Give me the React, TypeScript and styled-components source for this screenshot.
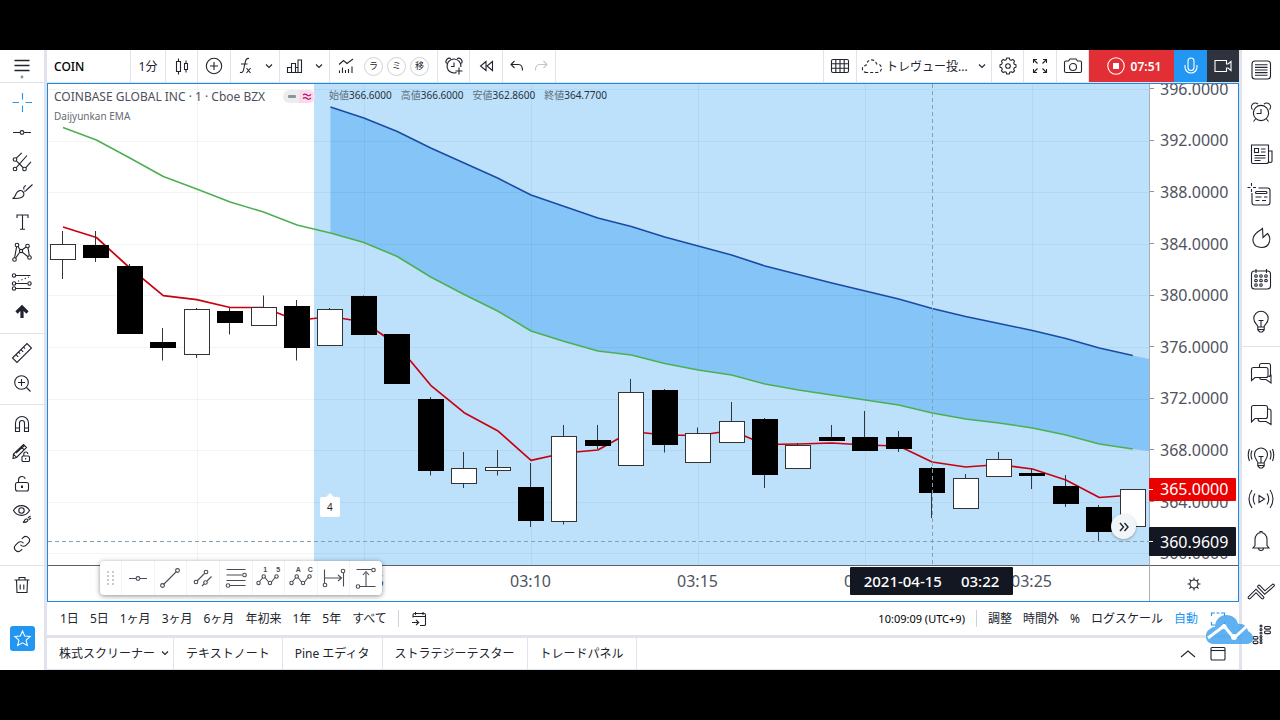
import React from 'react';
import styled, { createGlobalStyle, css } from 'styled-components';

const GlobalStyle = createGlobalStyle`
  *, *::before, *::after { box-sizing: border-box; }
  html, body { margin: 0; padding: 0; background: #000; }
  body, button {
    font-family: "Noto Sans", "Noto Sans CJK JP", sans-serif;
    font-size: 12px;
    color: #20242e;
  }
  button { margin: 0; padding: 0; border: 0; background: none; cursor: pointer; }
  ul { margin: 0; padding: 0; list-style: none; }
  h1, h2, p { margin: 0; font-weight: 400; }
`;

const LINE = '#e0e3eb';
const BLUE = '#2196f3';

/* ---------- icons ---------- */

const Glyph = styled.svg<{ $size: number }>`
  display: block;
  flex: none;
  width: ${p => p.$size}px;
  height: ${p => p.$size}px;
  overflow: visible;
  fill: none;
  stroke: currentColor;
  stroke-width: 1.1;
`;

const ICONS: Record<string, React.ReactNode> = {
  menu: <><path d="M-7.5-5.5h15M-7.5-.5h15M-7.5 4.5h15" strokeWidth="1.7" /><circle cx="0" cy="11" r="1.4" fill="#8a8d96" stroke="none" /></>,
  cross: <path d="M-9.5.5h6.5M3.5.5H10M.5-9v6.5M.5 3.5V10" />,
  hline: <><path d="M-9 .5h7M2 .5h7" /><circle cx="0" cy=".5" r="1.9" /></>,
  fork: <><circle cx="-7" cy="-2.5" r="1.8" /><circle cx="-7" cy="7" r="1.8" /><circle cx="2.5" cy="7" r="1.8" /><path d="M-5.7-3.8l5.5-5.4M-5.7 5.7L5-6.5M3.8 5.7L9-.2M-5.6-1.2L1 5.5" /></>,
  brush: <><path d="M-9.5 6.500c3-.8 2.500-3 4-5.500c1.500-2.600 4.500-3.300 6.300-1.500c2 2 1.200 4.800-1.300 6c-2.500 1.200-5.500 1-9 1zM2-2.500c-.8-2 .2-3.500 2-4M4.500-2L10.500-7.500M2.200-.8c1.300 0 1.900-.4 2.300-1.200" /></>,
  text: <path d="M-5-4v-3H6v3M.5-7V7M-2 7.200h5" />,
  pattern: <><circle cx="-5" cy="-7" r="1.800" /><circle cx="5.500" cy="-6" r="1.800" /><circle cx="-7.500" cy="7.500" r="1.800" /><circle cx="7.500" cy="5.500" r="1.800" /><circle cx="-1" cy="-1" r="1.600" /><path d="M-5.400-5.200l-2 10.800M-4-5.500l2 3.200M0-2l4-3M6-4.200L7.300 3.700M0 0L6 4.700M-2.200.2L-6.300 6" /></>,
  fib: <><circle cx="-8" cy="-6.500" r="1.700" /><circle cx="7.500" cy="1.500" r="1.700" /><circle cx="-8" cy="1.500" r="1.700" /><circle cx="-8" cy="6.500" r="1.700" /><path d="M-6-6.500H8.500M-6 1.500H5.500M-6 6.500H8.500" /><path d="M-4-.8L7-5" strokeDasharray="1.200 2.400" /></>,
  arrowUp: <path d="M0-5.500V6M-5.500.5L0-5L5.500 .5" strokeWidth="3.200" />,
  ruler: <path d="M-9.500 5L5-9.500L9.500-5L-5 9.500zM-6 1.600l2.200 2.200M-3.500-.9l1.600 1.600M-1-3.400l2.200 2.200M1.500-5.900l1.600 1.600" />,
  zoomIn: <><circle cx="-.5" cy="-.5" r="6.800" /><path d="M4.500 4.500L8.500 8.500M-4-.5h7M-.5-4v7" /></>,
  magnet: <path d="M-6.500 7.500V-1a6.500 6.500 0 0 1 13 0V7.500H2.500V-1a2.500 2.500 0 0 0-5 0V7.500zM-6.500 4h4M2.500 4h4" />,
  pencilLock: <><path d="M-9 4.500L-8.500 0L1.500-9.500L4.500-6.500L-5.500 3.500zM-8.500 0l3 3.500M-6-1L2.500-8.500M-.8-7.200l3 3" /><rect x="0" y="2" width="7.500" height="5.500" rx="1" fill="#fff" /><path d="M1.800 2V0a2 2 0 0 1 4 0" /><path d="M3.700 4v1.500" /></>,
  lock: <><rect x="-6.500" y="-1.500" width="13" height="8.500" rx="2" /><path d="M-3.500-1.500V-4a3.500 3.500 0 0 1 6.800-1.200" /><path d="M0 1.500v2.500" strokeWidth="2" /></>,
  eye: <><path d="M-8.500-3.500C-5-10 4-10 7.500-3.500C4 3-5 3-8.500-3.500z" /><circle cx="-.5" cy="-3.500" r="2.700" /><path d="M1 8.500c1.500-.5 1-3 3-3.500c2-.3 2.500 1 1.500 2.200c-1 1.300-3 1.300-4.500 1.300zM6 4l2.500-2M7 5.500l2-1.500" /></>,
  chain: <g transform="translate(-9 -9) scale(.75)" strokeWidth="1.500"><path d="M10 13a5 5 0 0 0 7.540.540l3-3a5 5 0 0 0-7.070-7.070l-1.720 1.710M14 11a5 5 0 0 0-7.540-.540l-3 3a5 5 0 0 0 7.070 7.070l1.710-1.710" /></g>,
  trash: <path d="M-7.500-5h15M-3-5v-2.500H3V-5M-5.500-5l.5 12.500H5L5.500-5M-1.800-.5v5M1.800-.5v5" />,
  star: <path d="M0-7.500L2.200-2.500L7.700-2L3.600 1.700L4.800 7L0 4.300L-4.800 7L-3.600 1.700L-7.700-2L-2.200-2.500z" />,
  candles: <path d="M-5.500-4.500h4v10h-4zM-3.500-7.500v3M-3.500 5.500v3M2.500-2.500h3v6h-3zM4-5.500v3M4 3.500v3" />,
  plusCircle: <><circle cx="0" cy="0" r="7.700" /><path d="M-4 0h8M0-4v8" /></>,
  fx: <><path d="M4-7.500C1.500-8 .8-6.500.3-4L-1.500 4C-2 6.500-3.500 7-5 6.200M-4-2h6.500" /><path d="M1.500 2l4 5M5.500 2l-4 5" /></>,
  chevron: <path d="M-3-1.500L0 1.500L3-1.500" />,
  bars: <path d="M-7.500 6.500v-5h4v5zM-3.500 6.500V-2.500h4V6.500zM.5 6.500V1.500h2.500M3 6.500V-6h3.500V6.500zM-7.500 6.500h14" />,
  indicators: <path d="M-7-1.500L-2.500-5.500L1-2.500L7-7M-6.500 7V4.500M-3.500 7V1.500M-.5 7V4M2.500 7V3M6 7V.5" />,
  alarm: <><circle cx="0" cy="1" r="7.600" /><path d="M-8.500-2.500A3.700 3.700 0 0 1-3-7.800M3-7.800A3.700 3.700 0 0 1 8.500-2.500M0-3v4.500h-4.500M-5.500 7l-2 2.500M5.500 7l2 2.500" /></>,
  alarmAdd: <><path d="M2.500 6.500A7 7 0 1 1 6.900 1M-7.500-2.500A3.500 3.500 0 0 1-3-7.500M3-7.500A3.500 3.500 0 0 1 7.500-2.500M0-3.500v4h-3M5 1.500v7M1.500 5h7" /></>,
  rewind: <path d="M0-4.500V4.500L-5.500 0zM6.500-4.500V4.500L1 0z" />,
  undo: <path d="M-2.500-5L-6-1.500L-2.500 2M-6-1.500H1.500Q5.500-1.500 5.500 4.500" />,
  redo: <path d="M2.500-5L6-1.500L2.500 2M6-1.500H-1.500Q-5.500-1.500-5.500 4.500" />,
  grid: <><rect x="-8.500" y="-6.500" width="17" height="13" rx="1.500" /><path d="M-8.500-2.200h17M-8.500 2.200h17M-4.200-6.500v13M0-6.500v13M4.200-6.500v13" /></>,
  cloud: <path d="M-5 6.500C-11 6.500-11-.5-6-.5C-5.500-7.500 3.500-8 4.500-2C11-2.500 11 6.500 5 6.500z" strokeDasharray="3 2" />,
  gear: <><path d="M-1.500-7.800h3l.6 2 1.700.7 1.900-1 2.100 2.100-1 1.900.7 1.700 2 .6v3l-2 .6-.7 1.700 1 1.900-2.100 2.100-1.900-1-1.700.7-.6 2h-3l-.6-2-1.700-.7-1.900 1-2.100-2.100 1-1.900-.7-1.700-2-.6v-3l2-.6.7-1.700-1-1.900 2.100-2.100 1.900 1 1.700-.7z" transform="scale(.84) translate(0 -1.700)" strokeWidth="1.300" strokeLinejoin="round" /><circle cx="0" cy="0" r="2.300" /></>,
  expand: <path d="M-6.500-3V-6.500H-3M-6.500-6.500L-2.500-2.500M3-6.500H6.500V-3M6.500-6.500L2.500-2.500M-6.500 3V6.500H-3M-6.500 6.500L-2.500 2.500M3 6.500H6.500V3M6.500 6.500L2.500 2.500" />,
  camera: <><path d="M-8.500-3.500q0-1.500 1.500-1.500h2.500l1.500-2h6l1.500 2h2.500q1.500 0 1.500 1.500v8.500q0 1.500-1.500 1.500h-14q-1.500 0-1.500-1.500z" /><circle cx="0" cy="1" r="3.500" /></>,
  record: <><circle cx="0" cy="0" r="8.200" /><rect x="-3" y="-3" width="6" height="6" fill="currentColor" stroke="none" /></>,
  mic: <><rect x="-3" y="-8" width="6" height="12.500" rx="3" /><path d="M-6-1V1a6 6 0 0 0 12 0V-1" /></>,
  video: <path d="M-8-5.500H3.500V-2L5-2L8-4.500V4.500L5 2L3.500 2V5.500H-8z" />,
  list: <><rect x="-9" y="-9" width="18.500" height="18" rx="3" /><path d="M-6-5.200h12.500M-6-2.600h12.500M-6 0h12.500M-6 2.600h12.500M-6 5.200h12.500" /></>,
  news: <><path d="M-9.500-9H7.500V7.500Q7.500 9.500 5.500 9.500H-8Q-9.500 9.500-9.500 8zM7.500-3H11V7.500a2 2 0 0 1-3.500 0M-6.500-5.500h4v4h-4zM0-5h4.500M0-2h4.500M-6.500 1.500h11M-6.500 4h11M-6.500 6.500h6" /></>,
  dataWindow: <><path d="M-9-3v9.500q0 2.500 2.500 2.500h13q2.500 0 2.500-2.500v-12q0-2.500-2.500-2.500h-9M-9.500-13v3M-9.500-7v3M-13.500-8.500h3M-8-8.500h3" /><rect x="-5.500" y="-4.500" width="11.500" height="2" rx="1" /><path d="M-5.500 1h6M3 1h3.500M-5.500 4.500h4M1 4.500h4" /></>,
  flame: <path d="M-5-4.500C-10 0-9 9.500 .5 9.500C9.500 9.500 10.500-.5 6.500-4.500L2-.5L1.500-9.500C-.5-7.500-3.500-6.500-5-4.500z" />,
  calendar: <><rect x="-9.500" y="-9" width="19" height="18" rx="3" /><path d="M-5-11v4M5.500-11v4" />{[-5, 0, 5].flatMap(x => [-4, .5, 5].map(y => x === 5 && y === 5 ? null : <circle key={x + '_' + y} cx={x} cy={y} r="1.300" />))}</>,
  bulb: <path d="M-3 5C-3.300 2.500-7.200 1.500-7.200-3.500A7.200 7.200 0 0 1 7.200-3.500C7.200 1.500 3.300 2.500 3 5zM-3.200 5v3l2 2h2.400l2-2v-3M-3 7.500H3M0 4.500V-1.500M-2.500-1.500h5" />,
  chats: <path d="M-1.500-5.500V-7.500q0-2 2-2h7q2 0 2 2V1.500q0 2-2 2M-7.500-5.500H5q2 0 2 2V2.500q0 2-2 2H-6L-9.500 7.500V-3.500q0-2 2-2M-1.500 4.500q.5 2 2 2h4.500l5 3.500V1.500" />,
  chat: <path d="M-7.500-9.500H4.500q2 0 2 2V1.500q0 2-2 2H-6L-9.500 7V-7.500q0-2 2-2M6.500-6H7.500q2.500 0 2.500 2V9.500L5 6.500H-1q-2 0-2-3" />,
  bulbWaves: <><path d="M-3 6C-3.300 3.500-6.500 2-6.500-2.500A6.500 6.500 0 0 1 6.500-2.500C6.500 2 3.300 3.500 3 6zM-3.200 6v3l2 2h2.400l2-2v-3M-3 8.500H3M0 5.500V-.5M-2.500-.5h5" /><path d="M-9-6.500Q-11-2-9 2.500M-11.500-8Q-14-2-11.500 4M9-6.500Q11-2 9 2.500M11.500-8Q14-2 11.500 4" /></>,
  stream: <path d="M-2-3.500L3.500 0L-2 3.500zM-6-5.500Q-9.500 0-6 5.500M-9-9Q-15 0-9 9M6-5.500Q9.500 0 6 5.500M9-9Q15 0 9 9" />,
  bell: <path d="M-6 4.500V-1.500C-6-6-3-8-1-8.200V-9.500H1V-8.200C3-8 6-6 6-1.500V4.500L8 7H-8zM-2.500 7Q-2.500 9.500 0 9.500T2.500 7" />,
  depth: <g strokeLinecap="round"><path d="M-11.500 5.500L-5-1L1.500 5.500M-2-5.500L3.800 .5L12-6.500" strokeWidth="3.600" /><path d="M-11.500 5.500L-5-1L1.500 5.500M-2-5.500L3.800 .5L12-6.500" stroke="#fff" strokeWidth="1.500" /></g>,
  dom: <>{[-8, -4.500, -1].map(y => <circle key={y} cx="0" cy={y} r="1" />)}{[-7.500, -3].map(y => <rect key={y} x="3.500" y={y} width="6" height="2.600" rx="1.300" />)}{[2.500, 7].map(y => <rect key={y} x="-8" y={y} width="5" height="2.600" rx="1.300" />)}{[2.500, 5.500, 8.500].map(y => <circle key={y} cx="0" cy={y} r="1" />)}</>,
  trend: <><path d="M-6.500 6.500L6.500-6.500" /><circle cx="-7.500" cy="7.500" r="1.900" /><circle cx="7.500" cy="-7.500" r="1.900" /></>,
  channel: <><path d="M-6 3L1.500-4.500M-1 8L1 6M4 3L8.500-1.500" /><circle cx="-7" cy="4" r="1.800" /><circle cx="3" cy="-6" r="1.800" /><circle cx="2.500" cy="4.500" r="1.800" /></>,
  levels: <><path d="M-9.500-8.500H9.500M-9.500-3H6M-9.500 2.500H9.500M-6 7.500H9.500" /><circle cx="8.500" cy="-3" r="1.800" /><circle cx="-8" cy="7.500" r="1.800" /></>,
  zigzag: <><path d="M-8.500 3.500l3-3.500M-3-.5l3.500 4.500M3.500 4L7-.5" /><circle cx="-9.500" cy="5" r="1.700" /><circle cx="-4.300" cy="-1.500" r="1.700" /><circle cx="2" cy="5" r="1.700" /><circle cx="8.500" cy="-1.500" r="1.700" /></>,
  hrange: <><path d="M-9.500-8.500V5M9.500-5V8.500M-9.500 0H7M4-3L7.500 0L4 3" /><circle cx="-9" cy="7" r="1.800" /><circle cx="9" cy="-7" r="1.800" /></>,
  vrange: <><path d="M-9.500-8.500H5.500M-6 8.500H9.500M0 8V-5M-3-3L0-6.500L3-3" /><circle cx="7.500" cy="-8" r="1.800" /><circle cx="-8" cy="8.500" r="1.800" /></>,
  gotoDate: <path d="M-6-1.500V-4q0-1.500 1.500-1.500H5q1.500 0 1.500 1.500v9.500q0 1-1.500 1H1M-6-2.500H6.500M-3.500-7v3M4-7v3M-7 3.500H-.5M-3 .8L-.3 3.500L-3 6.200" />,
  sun: <><circle cx="0" cy="0" r="4" /><path d="M0-4V-6.500M0 4V6.500M-4 0H-6.500M4 0H6.500M-2.800-2.800L-4.600-4.600M2.800-2.800L4.600-4.600M-2.800 2.800L-4.600 4.600M2.800 2.800L4.600 4.600" /></>,
  corners: <path d="M-6.500-3V-6H-3M-1.500-6H1.500M3-6H6.500V-3M-6.500 3V6H-3M3 6H6.500V3" />,
  up: <path d="M-7 3L0-3L7 3" />,
  panel: <><rect x="-7" y="-6.500" width="14" height="12.500" rx="1" /><path d="M-7-3.500H7" /></>,
  forward: <path d="M-4-4L-.5 0L-4 4M.5-4L4 0L.5 4" strokeWidth="1.400" />,
};

/* Drawings are centred on the origin, so the box size crops without scaling. */
const Icon = ({ name, size = 28 }: { name: string; size?: number }) => (
  <Glyph $size={size} viewBox={`${-size / 2} ${-size / 2} ${size} ${size}`} aria-hidden="true">{ICONS[name]}</Glyph>
);

/* ---------- page frame ---------- */

const Page = styled.div`
  min-height: 100vh;
  display: grid;
  grid-template-rows: 50px minmax(620px, 1fr) 50px;
  background: #000;
`;

const Workspace = styled.div`
  grid-row: 2;
  display: grid;
  grid-template-columns: 44px minmax(0, 1fr) 38px;
  column-gap: 3px;
  background: ${LINE};
`;

const Center = styled.main`
  position: relative;
  display: flex;
  flex-direction: column;
  min-width: 0;
`;

/* ---------- left tools ---------- */

const ToolRail = styled.nav`
  display: flex;
  flex-direction: column;
  align-items: center;
  background: #fff;
`;

const ToolGroup = styled.ul`
  width: 100%;
  padding: 4px 0 6px;
  border-bottom: 1px solid ${LINE};
  &:last-of-type { border-bottom: 0; }
`;

const ToolButton = styled.button<{ $active?: boolean }>`
  display: flex;
  align-items: center;
  justify-content: center;
  width: 100%;
  height: 30px;
  color: ${p => (p.$active ? BLUE : '#20242e')};
`;

const MenuButton = styled(ToolButton)`
  height: 33px;
  flex: none;
  border-bottom: 1px solid ${LINE};
`;

const FavoriteButton = styled.button`
  display: flex;
  align-items: center;
  justify-content: center;
  width: 25px;
  height: 25px;
  margin: auto 0 19px;
  border-radius: 3px;
  background: ${BLUE};
  color: #fff;
`;

/* ---------- top bar ---------- */

const TopBar = styled.header`
  display: flex;
  height: 32px;
  margin-bottom: 1px;
  background: #fff;
  overflow: hidden;
`;

const Cell = styled.div<{ $w?: number; $start?: boolean }>`
  display: flex;
  align-items: center;
  justify-content: ${p => (p.$start ? 'flex-start' : 'center')};
  flex: none;
  width: ${p => p.$w ?? 33}px;
  padding-left: ${p => (p.$start ? 7 : 0)}px;
  border-right: 1px solid ${LINE};
`;

const TemplateCell = styled(Cell)`
  padding-right: 6px;
`;

const RightCells = styled.div`
  display: flex;
  margin-left: auto;
  border-left: 1px solid ${LINE};
`;

const BarButton = styled.button<{ $w?: number; $muted?: boolean }>`
  display: flex;
  align-items: center;
  justify-content: center;
  flex: none;
  height: 32px;
  width: ${p => (p.$w ? `${p.$w}px` : 'auto')};
  color: ${p => (p.$muted ? '#c4c6cc' : '#20242e')};
`;

const SymbolButton = styled(BarButton)`
  font-weight: 500;
  color: #000;
`;

const RoundButton = styled.button`
  width: 19px;
  height: 19px;
  margin: 0 2px;
  border: 1px solid #d0d2d8;
  border-radius: 50%;
  font-size: 9px;
  line-height: 16px;
`;

const LayoutName = styled.span`
  width: 88px;
  text-align: left;
  white-space: nowrap;
`;

const MediaButton = styled.button<{ $w: number; $bg: string }>`
  display: flex;
  align-items: center;
  justify-content: center;
  gap: 1px;
  height: 32px;
  width: ${p => p.$w}px;
  background: ${p => p.$bg};
  color: #fff;
  font-weight: 600;
`;

/* ---------- chart ---------- */

const ChartFrame = styled.section`
  position: relative;
  flex: 1;
  display: grid;
  grid-template-columns: minmax(0, 1fr) 89px;
  grid-template-rows: minmax(0, 1fr) 36px;
  border: 1px solid #1e88e5;
  background: #fff;
`;

const Plot = styled.div`
  position: relative;
  min-height: 0;
`;

const PlotSvg = styled.svg`
  position: absolute;
  inset: 0;
  width: 100%;
  height: 100%;
  display: block;
`;

const Legend = styled.div`
  position: absolute;
  top: 3px;
  left: 6px;
  right: 0;
`;

const LegendRow = styled.div`
  display: flex;
  align-items: center;
  height: 18px;
  white-space: nowrap;
`;

const LegendTitle = styled.h1`
  width: 229px;
  font-size: 12px;
  color: #4c505b;
`;

const Badge = styled.span`
  display: flex;
  width: 32px;
  height: 13px;
  border-radius: 6px;
  overflow: hidden;
  background: linear-gradient(90deg, #eceded 50%, #fbd9ec 50%);
`;

const Ohlc = styled.p`
  display: flex;
  gap: 9px;
  margin-left: 14px;
  padding-bottom: 3px;
  font-size: 10px;
  color: #5c6f80;
`;

const OhlcValue = styled.span`
  color: #26323f;
`;

const StudyName = styled.h2`
  margin-top: 3px;
  font-size: 10px;
  line-height: 16px;
  color: #666a74;
`;

const DividendTag = styled.button`
  position: absolute;
  left: 25.6%;
  bottom: 48px;
  width: 20px;
  height: 20px;
  margin-left: -10px;
  border-radius: 2px;
  background: #fff;
  font-size: 10px;
  &::before {
    content: "";
    position: absolute;
    left: 6px;
    top: -4px;
    border: 4px solid transparent;
    border-top: 0;
    border-bottom-color: #fff;
  }
`;

const JumpButton = styled.button`
  position: absolute;
  right: 13px;
  bottom: 26px;
  display: flex;
  align-items: center;
  justify-content: center;
  width: 25px;
  height: 25px;
  border-radius: 50%;
  background: #f2f5f8;
  box-shadow: 0 1px 3px rgba(0, 0, 0, 0.3);
`;

const PriceAxis = styled.div`
  position: relative;
  min-height: 0;
  border-left: 1px solid #a9adb5;
`;

const PriceClip = styled.div`
  position: absolute;
  inset: 0;
  overflow: hidden;
`;

const PriceList = styled.ul`
  display: flex;
  flex-direction: column;
  height: calc(100% + 35px);
  margin-top: -21px;
`;

const axisText = css`
  font-size: 16px;
  line-height: 20px;
  white-space: nowrap;
`;

const PriceItem = styled.li`
  ${axisText}
  flex: 1;
  display: flex;
  align-items: center;
  gap: 6px;
  color: #50535e;
  &::before { content: ""; width: 4px; height: 1px; background: #8b8f99; }
`;

const PriceTag = styled.div<{ $bg: string; $h: number }>`
  ${axisText}
  position: absolute;
  left: -1px;
  display: flex;
  align-items: center;
  gap: 7px;
  width: 87px;
  height: ${p => p.$h}px;
  margin-top: -${p => p.$h / 2}px;
  border-radius: 1px;
  background: ${p => p.$bg};
  color: #fff;
  &::before { content: ""; width: 4px; height: 1px; background: #fff; }
`;

const TimeAxis = styled.div`
  position: relative;
  border-top: 1px solid #5d606b;
`;

const TimeList = styled.ul`
  display: grid;
  grid-template-columns: repeat(6, 1fr);
  padding: 5px 34px 0 65px;
`;

const TimeItem = styled.li`
  ${axisText}
  text-align: center;
  color: #50535e;
`;

const TimeTag = styled.div`
  ${axisText}
  position: absolute;
  top: 1px;
  left: 80.2%;
  display: flex;
  align-items: center;
  justify-content: center;
  gap: 19px;
  width: 163px;
  height: 28px;
  margin-left: -81px;
  border-radius: 1px;
  background: #131722;
  color: #fff;
  font-size: 15px;
  font-weight: 500;
`;

const AxisCorner = styled.div`
  display: flex;
  align-items: center;
  justify-content: center;
  border-top: 1px solid #5d606b;
  border-left: 1px solid #a9adb5;
`;

const FloatingTools = styled.ul`
  position: absolute;
  left: 52px;
  bottom: 6px;
  display: flex;
  align-items: center;
  height: 34px;
  width: 282px;
  border-radius: 4px;
  background: #fff;
  box-shadow: 0 1px 5px rgba(0, 0, 0, 0.45);
  li { flex: 1; height: 34px; border-left: 1px solid #f3f3f5; }
`;

const Handle = styled.svg`
  flex: none;
  width: 21px;
  height: 14px;
  fill: #b5b8c0;
`;

const FloatButton = styled.button`
  position: relative;
  display: flex;
  align-items: center;
  justify-content: center;
  width: 100%;
  height: 34px;
  color: #4a4d57;
`;

const FloatLabel = styled.span`
  position: absolute;
  top: 3px;
  right: 4px;
  display: flex;
  justify-content: space-between;
  width: 17px;
  font-family: "Liberation Sans", sans-serif;
  font-size: 7px;
  line-height: 12px;
  font-weight: 700;
`;

/* ---------- bottom bars ---------- */

const RangeBar = styled.div`
  display: flex;
  align-items: center;
  height: 33px;
  padding: 0 12px 0 13px;
  background: #fff;
`;

const RangeGroup = styled.div`
  display: flex;
  align-items: center;
  gap: 11px;
  &:last-child { margin-left: auto; }
`;

const TextButton = styled.button<{ $active?: boolean }>`
  flex: none;
  line-height: 20px;
  white-space: nowrap;
  color: ${p => (p.$active ? BLUE : '#20242e')};
`;

const Clock = styled.button`
  font-size: 11px;
  line-height: 20px;
  color: #000;
`;

const Divider = styled.span`
  width: 1px;
  height: 17px;
  background: #cfd2d9;
`;

const TabBar = styled.div`
  display: flex;
  height: 32px;
  margin-top: 3px;
  padding-right: 7px;
  border-bottom: 1px solid ${LINE};
  background: #fff;
`;

const Tab = styled.button`
  display: flex;
  align-items: center;
  flex: none;
  padding: 0 12px 2px;
  border-right: 1px solid ${LINE};
  white-space: nowrap;
`;

const TabMenu = styled(Tab)`
  padding-right: 0;
  gap: 2px;
`;

const TabActions = styled.div`
  display: flex;
  align-items: center;
  gap: 2px;
  margin-left: auto;
`;

const CloudLogo = styled.svg`
  position: absolute;
  right: -15px;
  bottom: 26px;
  z-index: 2;
  width: 48px;
  height: 29px;
`;

/* ---------- right sidebar ---------- */

const SideRail = styled.nav`
  background: #fff;
`;

const SideGroup = styled.ul`
  display: flex;
  flex-direction: column;
  gap: 4px;
  padding: 7px 0 5px;
  border-bottom: 1px solid ${LINE};
  &:first-child { padding-top: 1px; }
  &:last-child { border-bottom: 0; }
`;

const SideButton = styled.button`
  display: flex;
  align-items: center;
  justify-content: center;
  width: 100%;
  height: 38px;
`;

/* ---------- data ---------- */

const TOP = 84;
const PLOT_H = 481;
const priceY = (p: number) => 89.5 + (396 - p) * 12.9;
const pct = (p: number) => `${((priceY(p) - TOP) / PLOT_H) * 100}%`;
const barX = (i: number) => 63 + i * 33.43;

const PRICES = [396, 392, 388, 384, 380, 376, 372, 368, 364, 360];
const TIMES = ['03:00', '03:05', '03:10', '03:15', '03:20', '03:25'];

const FAST = [227, 237.5, 268, 295.7, 299.7, 307.5, 307.5, 320.5, 316.5, 322, 345, 385.3, 412.7, 430.7, 460.3, 453, 450, 431.5, 435, 435.5, 430.5, 444.5, 444, 443, 445, 446, 462, 467, 464.5, 469, 480, 497.5, 495];
const MID = [127.5, 140, 158, 176.5, 189, 202, 212, 225, 233, 242.5, 256.5, 277, 294.5, 311, 331, 341.5, 351, 355, 363.5, 370, 375, 384, 390, 395, 400, 405, 413, 419, 423, 428, 435, 444, 449];
const SLOW = [107, 118, 131.5, 148, 163, 178, 195, 206.5, 218, 226.5, 237, 246, 255, 266, 274.5, 283, 291, 299, 308.5, 316.5, 323.5, 330.5, 338.5, 348, 355.5];

/* high, body top, body bottom, low, rising */
const CANDLES: [number, number, number, number, boolean][] = [
  [231, 244, 260, 279, true], [231, 244.5, 258, 262, false], [264, 266, 334, 334, false], [328, 341.5, 348, 360.5, false],
  [308, 308.5, 354.5, 358, true], [308, 311, 323, 334.5, false], [295.5, 307, 325.5, 325.5, true], [300, 306, 348, 360.5, false],
  [308, 308.5, 345.5, 345.5, true], [295.5, 295.5, 334.5, 334.5, false], [334, 334, 384, 384, false], [397, 399, 471, 475.5, false],
  [452, 467.5, 483.5, 488, true], [450, 466.5, 470.5, 475.5, true], [463, 486.5, 520.5, 527, false], [425, 435.5, 521.5, 524.5, true],
  [425, 439.5, 446, 449, false], [379, 392, 465.5, 465.5, true], [389, 389.5, 445, 452.5, false], [427.5, 432.5, 462.5, 462.5, true],
  [402, 420.5, 442.5, 442.5, true], [418, 419, 475, 488, false], [443, 444.5, 468.5, 468.5, true], [425, 436.5, 440.5, 440.5, false],
  [411, 437, 451, 451, false], [431, 437, 448.5, 452, false], [467, 467.5, 492.5, 518, false], [474, 478, 508.5, 508.5, true],
  [452, 459, 477, 477, true], [469, 472.5, 476, 489, false], [475, 485.5, 504, 507, false], [505, 506.5, 532, 541, false],
  [489, 489, 527, 527, true],
];

const points = (ys: number[], from = 0) => ys.map((y, i) => `${barX(from + i)},${y}`).join(' ');
const cloudArea = `${points(SLOW, 8)} 1149,359 1149,451 ${MID.slice(8).map((y, i) => `${barX(8 + i)},${y}`).reverse().join(' ')}`;

const TOOLS = [
  [['cross', 'カーソル'], ['hline', 'トレンドライン'], ['fork', 'ピッチフォーク'], ['brush', 'ブラシ'], ['text', 'テキスト'], ['pattern', 'パターン'], ['fib', '予測'], ['arrowUp', 'アイコン']],
  [['ruler', '計測'], ['zoomIn', 'ズームイン']],
  [['magnet', 'マグネット'], ['pencilLock', '描画モード'], ['lock', 'ロック'], ['eye', '非表示'], ['chain', '同期']],
  [['trash', '削除']],
];

const SIDE = [
  [['list', 'ウォッチリスト'], ['alarm', 'アラート'], ['news', 'ニュース'], ['dataWindow', 'データウィンドウ'], ['flame', 'ホットリスト'], ['calendar', 'カレンダー'], ['bulb', 'アイデア']],
  [['chats', 'チャット'], ['chat', 'メッセージ'], ['bulbWaves', 'アイデアストリーム'], ['stream', '配信'], ['bell', '通知']],
  [['depth', '注文パネル'], ['dom', '板情報']],
];

const FLOATING = ['hline', 'trend', 'channel', 'levels', 'zigzag', 'zigzag', 'hrange', 'vrange'];
const FLOAT_NAMES = ['水平線', 'トレンドライン', '平行チャネル', 'リトレースメント', 'エリオット波動', '修正波', '期間', '価格範囲'];
const FLOAT_LABELS: Record<number, string[]> = { 4: ['1', '5'], 5: ['A', 'C'] };
const RANGES = ['1日', '5日', '1ヶ月', '3ヶ月', '6ヶ月', '年初来', '1年', '5年', 'すべて'];
const OHLC = [['始値', '366.6000'], ['高値', '366.6000'], ['安値', '362.8600'], ['終値', '364.7700']];

const ChartDrawing = () => (
  <PlotSvg viewBox="48 84 1101 481" preserveAspectRatio="none" aria-hidden="true">
    <rect x="314" y="84" width="835" height="481" fill="#bde1fa" />
    <polygon points={cloudArea} fill="#84c4f6" />
    <g stroke="#1e3c5a" strokeOpacity="0.06">
      {PRICES.map(p => <path key={p} d={`M48 ${Math.floor(priceY(p)) + 0.5}H1149`} />)}
      {TIMES.map((t, i) => <path key={t} d={`M${Math.round(197 + i * 167) + 0.5} 84V565`} />)}
    </g>
    <g fill="none" strokeWidth="1.5" strokeLinejoin="round">
      <polyline points={points(MID)} stroke="#4caf50" />
      <polyline points={points(SLOW, 8)} stroke="#1b4aa5" />
      <polyline points={points(FAST)} stroke="#c9000f" strokeWidth="1.700" />
    </g>
    <g strokeWidth="1">
      {CANDLES.map(([h, t, b, l, up], i) => {
        const x = Math.round(barX(i));
        const top = Math.round(t);
        const bottom = Math.round(b);
        return (
          <g key={i}>
            <path d={`M${x - 0.5} ${h}V${l}`} stroke="#33373d" />
            <rect x={x - 12.5} y={top + 0.5} width="25" height={Math.max(bottom - top - 1, 2)} fill={up ? '#fff' : '#000'} stroke={up ? '#333' : '#000'} />
          </g>
        );
      })}
    </g>
    <g stroke="#86a0b3" strokeDasharray="4 3">
      <path d="M932.5 84V565" />
      <path d="M48 541.500H1149" />
    </g>
  </PlotSvg>
);

export default function App() {
  return (
    <>
      <GlobalStyle />
      <Page>
        <Workspace>
          <ToolRail>
            <MenuButton aria-label="メニュー"><Icon name="menu" /></MenuButton>
            {TOOLS.map((group, g) => (
              <ToolGroup key={g}>
                {group.map(([icon, label]) => (
                  <li key={icon}><ToolButton aria-label={label} $active={icon === 'cross'}><Icon name={icon} /></ToolButton></li>
                ))}
              </ToolGroup>
            ))}
            <FavoriteButton aria-label="お気に入り"><Icon name="star" size={25} /></FavoriteButton>
          </ToolRail>

          <Center>
            <TopBar>
              <Cell $w={84} $start><SymbolButton>COIN</SymbolButton></Cell>
              <Cell $w={35}><BarButton>1分</BarButton></Cell>
              <Cell $w={32}><BarButton $w={30} aria-label="ローソク足"><Icon name="candles" /></BarButton></Cell>
              <Cell $w={33}><BarButton $w={30} aria-label="比較"><Icon name="plusCircle" /></BarButton></Cell>
              <Cell $w={49}>
                <BarButton $w={28} aria-label="インジケーター"><Icon name="fx" /></BarButton>
                <BarButton $w={20} aria-label="インジケーター一覧"><Icon name="chevron" size={16} /></BarButton>
              </Cell>
              <Cell $w={50}>
                <BarButton $w={28} aria-label="財務"><Icon name="bars" /></BarButton>
                <BarButton $w={20} aria-label="財務一覧"><Icon name="chevron" size={16} /></BarButton>
              </Cell>
              <TemplateCell $w={108}>
                <BarButton $w={32} aria-label="テンプレート"><Icon name="indicators" /></BarButton>
                <RoundButton>ラ</RoundButton>
                <RoundButton>ミ</RoundButton>
                <RoundButton>移</RoundButton>
              </TemplateCell>
              <Cell $w={32}><BarButton $w={30} aria-label="アラート追加"><Icon name="alarmAdd" /></BarButton></Cell>
              <Cell $w={33}><BarButton $w={30} aria-label="リプレイ"><Icon name="rewind" /></BarButton></Cell>
              <Cell $w={53}>
                <BarButton $w={24} aria-label="元に戻す"><Icon name="undo" /></BarButton>
                <BarButton $w={24} $muted aria-label="やり直す"><Icon name="redo" /></BarButton>
              </Cell>
              <RightCells>
                <Cell $w={33}><BarButton $w={30} aria-label="レイアウト"><Icon name="grid" /></BarButton></Cell>
                <Cell $w={135}>
                  <BarButton>
                    <Icon name="cloud" />
                    <LayoutName>トレヴュー投...</LayoutName>
                  </BarButton>
                  <BarButton $w={16} aria-label="レイアウト一覧"><Icon name="chevron" size={16} /></BarButton>
                </Cell>
                <Cell $w={32}><BarButton $w={30} aria-label="設定"><Icon name="gear" /></BarButton></Cell>
                <Cell $w={33}><BarButton $w={30} aria-label="全画面"><Icon name="expand" /></BarButton></Cell>
                <Cell $w={32}><BarButton $w={30} aria-label="スナップショット"><Icon name="camera" /></BarButton></Cell>
                <MediaButton $w={85} $bg="#e22e35"><Icon name="record" />07:51</MediaButton>
                <MediaButton $w={33} $bg={BLUE} aria-label="マイク"><Icon name="mic" /></MediaButton>
                <MediaButton $w={32} $bg="#2f333e" aria-label="カメラ"><Icon name="video" /></MediaButton>
              </RightCells>
            </TopBar>

            <ChartFrame>
              <Plot>
                <ChartDrawing />
                <Legend>
                  <LegendRow>
                    <LegendTitle>COINBASE GLOBAL INC · 1 · Cboe BZX</LegendTitle>
                    <Badge>
                      <svg width="32" height="13" viewBox="0 0 32 13" fill="none" aria-hidden="true">
                        <rect x="5" y="5" width="8" height="3" rx="1" fill="#8e9199" />
                        <path d="M20 5q2-1.800 4 0t4-.6M20 8.500q2-1.800 4 0t4-.6" stroke="#b0126c" strokeWidth="1.200" />
                      </svg>
                    </Badge>
                    <Ohlc>
                      {OHLC.map(([k, v]) => <span key={k}>{k}<OhlcValue>{v}</OhlcValue></span>)}
                    </Ohlc>
                  </LegendRow>
                  <StudyName>Daijyunkan EMA</StudyName>
                </Legend>
                <DividendTag>4</DividendTag>
                <JumpButton aria-label="最新のバーへ"><Icon name="forward" size={20} /></JumpButton>
              </Plot>

              <PriceAxis>
                <PriceClip>
                  <PriceList>
                    {PRICES.map(p => <PriceItem key={p}>{p.toFixed(4)}</PriceItem>)}
                  </PriceList>
                </PriceClip>
                <PriceTag $bg="#eb0000" $h={23} style={{ top: pct(365) }}>365.0000</PriceTag>
                <PriceTag $bg="#131722" $h={29} style={{ top: pct(360.9609) }}>360.9609</PriceTag>
              </PriceAxis>

              <TimeAxis>
                <TimeList>
                  {TIMES.map(t => <TimeItem key={t}>{t}</TimeItem>)}
                </TimeList>
                <TimeTag><span>2021-04-15</span><span>03:22</span></TimeTag>
              </TimeAxis>
              <AxisCorner><BarButton $w={30} aria-label="スケール設定"><Icon name="sun" /></BarButton></AxisCorner>

              <FloatingTools>
                <Handle viewBox="0 0 21 14" aria-hidden="true">
                  {[8, 13].flatMap(x => [1, 5, 9, 13].map(y => <circle key={`${x}-${y}`} cx={x} cy={y} r="1" />))}
                </Handle>
                {FLOATING.map((icon, i) => (
                  <li key={i}>
                    <FloatButton aria-label={FLOAT_NAMES[i]}>
                      <Icon name={icon} />
                      {FLOAT_LABELS[i] && <FloatLabel>{FLOAT_LABELS[i].map(t => <span key={t}>{t}</span>)}</FloatLabel>}
                    </FloatButton>
                  </li>
                ))}
              </FloatingTools>
            </ChartFrame>

            <RangeBar>
              <RangeGroup>
                {RANGES.map(r => <TextButton key={r}>{r}</TextButton>)}
                <Divider />
                <BarButton $w={18} aria-label="日付へ移動"><Icon name="gotoDate" size={18} /></BarButton>
              </RangeGroup>
              <RangeGroup>
                <Clock>10:09:09 (UTC+9)</Clock>
                <Divider />
                <TextButton>調整</TextButton>
                <TextButton>時間外</TextButton>
                <TextButton>%</TextButton>
                <TextButton>ログスケール</TextButton>
                <TextButton $active>自動</TextButton>
                <TextButton $active aria-label="最大化"><Icon name="corners" size={18} /></TextButton>
              </RangeGroup>
            </RangeBar>

            <TabBar>
              <TabMenu>株式スクリーナー<Icon name="chevron" size={16} /></TabMenu>
              <Tab>テキストノート</Tab>
              <Tab>Pine エディタ</Tab>
              <Tab>ストラテジーテスター</Tab>
              <Tab>トレードパネル</Tab>
              <TabActions>
                <BarButton $w={28} aria-label="パネルを開く"><Icon name="up" /></BarButton>
                <BarButton $w={28} aria-label="パネルを最大化"><Icon name="panel" /></BarButton>
              </TabActions>
            </TabBar>

            <CloudLogo viewBox="0 0 48 29" aria-hidden="true">
              <path d="M7 29C-2 28-2 17 4 14C6 12 8 12 9 12C9 5 14 0 20 0C27 0 31 4 32 9C37 8 41 11 42 16C46 18 48 22 47 25Q45 29 41 29z" fill="#43a3ee" fillOpacity="0.85" />
              <path d="M2 23L18 11L28 23L41 11" fill="none" stroke="#fff" strokeWidth="3" strokeLinejoin="round" />
              <circle cx="18" cy="11.500" r="2.500" fill="#fff" /><circle cx="28" cy="22" r="3" fill="#fff" />
            </CloudLogo>
          </Center>

          <SideRail>
            {SIDE.map((group, g) => (
              <SideGroup key={g}>
                {group.map(([icon, label]) => (
                  <li key={icon}><SideButton aria-label={label}><Icon name={icon} /></SideButton></li>
                ))}
              </SideGroup>
            ))}
          </SideRail>
        </Workspace>
      </Page>
    </>
  );
}
